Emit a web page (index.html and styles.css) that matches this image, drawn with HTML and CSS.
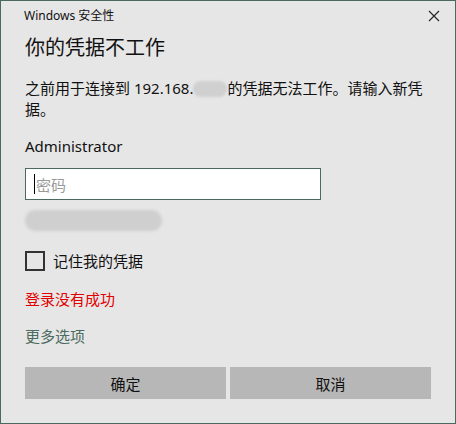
FILE: index.html
```html
<!DOCTYPE html>
<html lang="zh-CN">
<head>
<meta charset="utf-8">
<title>Windows 安全性</title>
<link rel="stylesheet" href="styles.css">
</head>
<body>
<div class="window">
  <div class="titlebar">
    <span class="title">Windows 安全性</span>
    <svg class="close" width="12" height="12" viewBox="0 0 12 12"><path d="M1 1 L11 11 M11 1 L1 11" stroke="#222" stroke-width="1.1" fill="none"/></svg>
  </div>
  <div class="content">
    <h1 class="heading">你的凭据不工作</h1>
    <p class="message"><span>之前用于连接到 192.168.</span><span class="redact-inline"></span><span>的凭据无法工作。请输入新凭</span><br><span>据。</span></p>
    <div class="user">Administrator</div>
    <div class="field"><span class="caret"></span><span class="placeholder">密码</span></div>
    <div class="redact-block"></div>
    <label class="remember"><span class="checkbox"></span><span>记住我的凭据</span></label>
    <div class="error">登录没有成功</div>
    <div class="more">更多选项</div>
    <div class="buttons">
      <button class="btn">确定</button>
      <button class="btn">取消</button>
    </div>
  </div>
</div>
</body>
</html>
```

FILE: styles.css
```css
* { box-sizing: border-box; }
html, body { margin: 0; padding: 0; }
body {
  font-family: "Noto Sans", "Noto Sans CJK SC", sans-serif;
  color: #000;
  background: #e6e6e6;
}
.window {
  width: 456px;
  height: 424px;
  border: 1px solid #4b6a5f;
  background: #e6e6e6;
  overflow: hidden;
}
.titlebar {
  height: 30px;
  display: flex;
  align-items: center;
  justify-content: space-between;
  padding: 0 15px 0 23px;
}
.title {
  font-size: 12px;
  line-height: 16px;
  color: #111;
}
.close { display: block; }
.content {
  padding: 0 24px 0 24px;
}
.heading {
  margin: 3px 0 0 0;
  font-size: 20px;
  font-weight: 400;
  line-height: 28px;
  color: #111;
}
.message {
  margin: 16px 0 0 0;
  font-size: 15px;
  line-height: 21px;
  color: #111;
  white-space: nowrap;
}
.redact-inline {
  display: inline-block;
  width: 34px;
  height: 16px;
  vertical-align: -3px;
  background: #d0d0d0;
  border-radius: 8px;
  filter: blur(1px);
}
.user {
  margin-top: 16px;
  font-size: 15px;
  line-height: 21px;
  color: #111;
}
.field {
  margin-top: 11px;
  width: 296px;
  height: 32px;
  border: 1px solid #4b6a5f;
  background: #fff;
  display: flex;
  align-items: center;
  padding-left: 8px;
}
.caret {
  width: 1px;
  height: 20px;
  background: #000;
}
.placeholder {
  font-size: 15px;
  color: #9a9a9a;
  margin-left: 1px;
}
.redact-block {
  margin-top: 10px;
  width: 137px;
  height: 21px;
  background: #cfcfcf;
  border-radius: 10px;
  filter: blur(1.5px);
}
.remember {
  margin-top: 19px;
  display: flex;
  align-items: center;
  font-size: 15px;
  color: #111;
}
.checkbox {
  width: 20px;
  height: 20px;
  border: 2px solid #333;
  margin-right: 8px;
}
.error {
  margin-top: 18px;
  font-size: 15px;
  line-height: 21px;
  color: #e00000;
}
.more {
  margin-top: 16px;
  font-size: 15px;
  line-height: 21px;
  color: #4c6b60;
}
.buttons {
  margin-top: 20px;
  display: flex;
  gap: 4px;
  width: 406px;
}
.btn {
  flex: 1;
  height: 32px;
  border: none;
  background: #b7b7b7;
  font-family: "Noto Sans", "Noto Sans CJK SC", sans-serif;
  font-size: 15px;
  color: #111;
  padding: 0;
}
```
